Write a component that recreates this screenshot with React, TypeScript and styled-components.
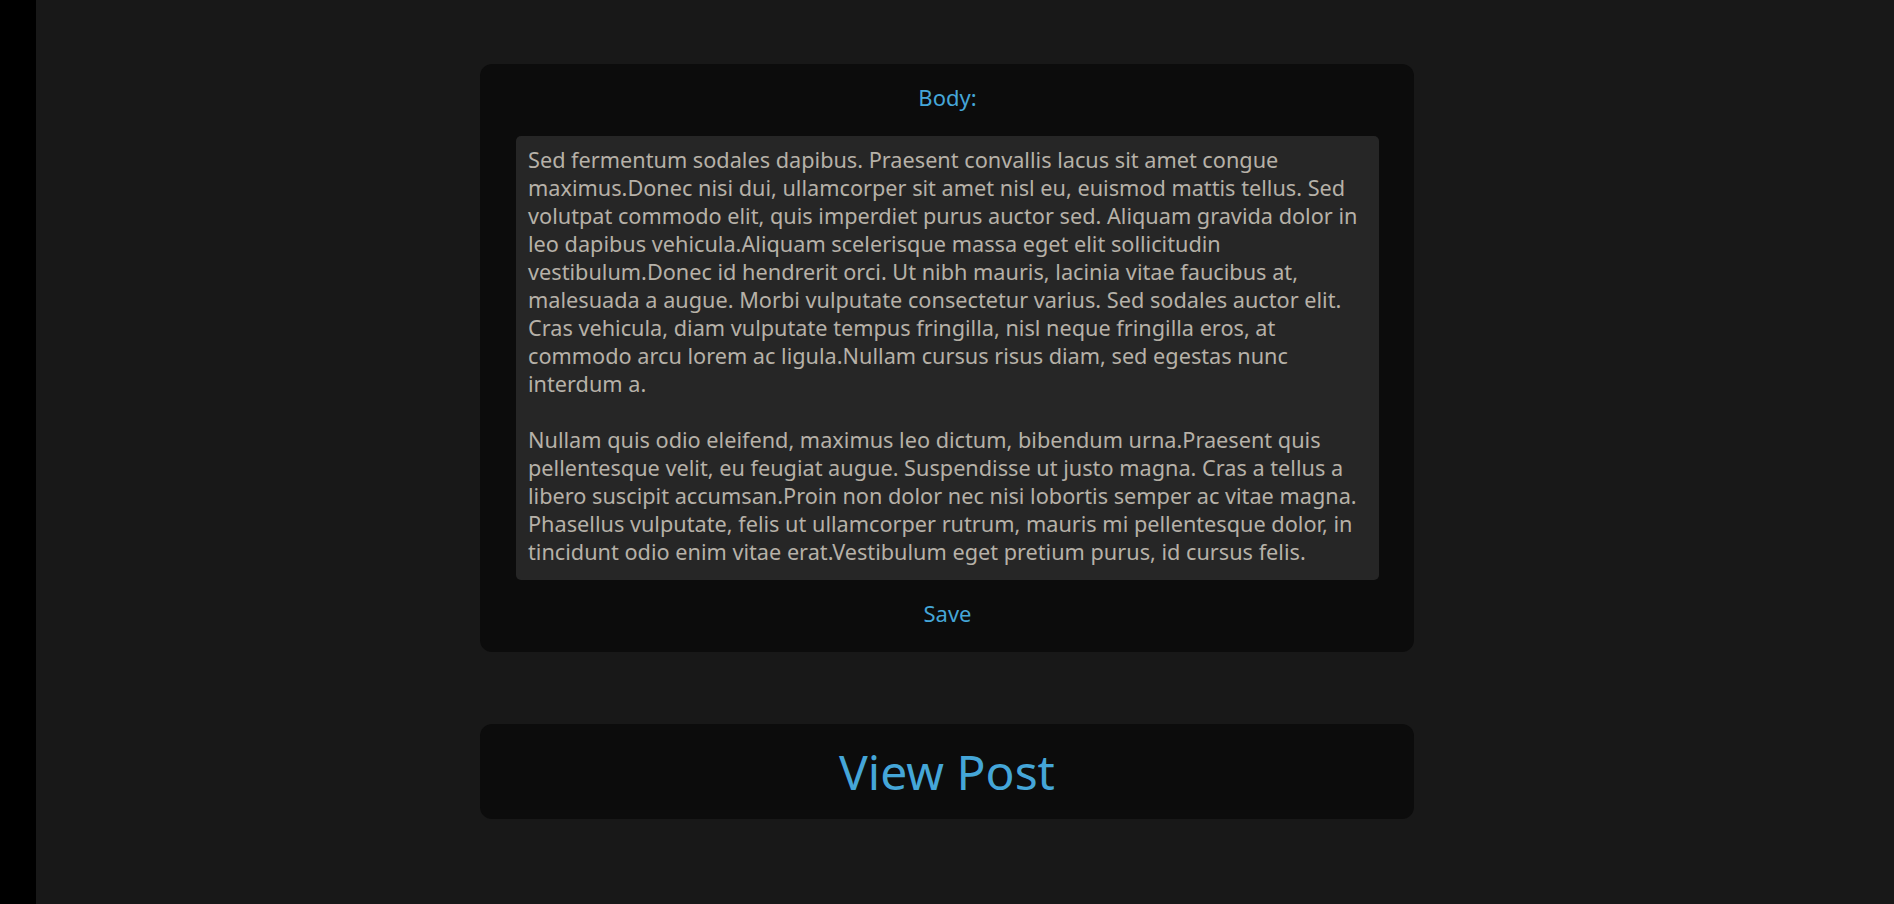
import { createGlobalStyle } from 'styled-components'
import styled from 'styled-components'

const BODY_TEXT = `Sed fermentum sodales dapibus. Praesent convallis lacus sit amet congue maximus.Donec nisi dui, ullamcorper sit amet nisl eu, euismod mattis tellus. Sed volutpat commodo elit, quis imperdiet purus auctor sed. Aliquam gravida dolor in leo dapibus vehicula.Aliquam scelerisque massa eget elit sollicitudin vestibulum.Donec id hendrerit orci. Ut nibh mauris, lacinia vitae faucibus at, malesuada a augue. Morbi vulputate consectetur varius. Sed sodales auctor elit. Cras vehicula, diam vulputate tempus fringilla, nisl neque fringilla eros, at commodo arcu lorem ac ligula.Nullam cursus risus diam, sed egestas nunc interdum a.

Nullam quis odio eleifend, maximus leo dictum, bibendum urna.Praesent quis pellentesque velit, eu feugiat augue. Suspendisse ut justo magna. Cras a tellus a libero suscipit accumsan.Proin non dolor nec nisi lobortis semper ac vitae magna. Phasellus vulputate, felis ut ullamcorper rutrum, mauris mi pellentesque dolor, in tincidunt odio enim vitae erat.Vestibulum eget pretium purus, id cursus felis.`

const GlobalStyle = createGlobalStyle`
  html, body {
    margin: 0;
    padding: 0;
    background: #181818;
    font-family: "Noto Sans", sans-serif;
  }
`

const App = () => {
  return (
    <>
      <GlobalStyle />
      <Layout>
        <Sidebar />
        <Main>
          <EditCard>
            <Label htmlFor="body">Body:</Label>
            <BodyInput id="body" defaultValue={BODY_TEXT} spellCheck={false} />
            <SaveButton type="button">Save</SaveButton>
          </EditCard>
          <ViewCard>
            <ViewLink href="#">View Post</ViewLink>
          </ViewCard>
        </Main>
      </Layout>
    </>
  )
}

export default App

const Layout = styled.div`
  display: flex;
  min-height: 904px;
`

const Sidebar = styled.aside`
  width: 36px;
  flex-shrink: 0;
  background: #000;
`

const Main = styled.main`
  flex: 1;
  padding: 64px 0 0 444px;
  display: flex;
  flex-direction: column;
  gap: 72px;
`

const EditCard = styled.form`
  width: 934px;
  box-sizing: border-box;
  background: #0c0c0c;
  border-radius: 12px;
  padding: 20px 35px 26px 36px;
  display: flex;
  flex-direction: column;
  align-items: center;
`

const Label = styled.label`
  color: #45a6d8;
  font-size: 22px;
  line-height: 26px;
  margin-bottom: 26px;
`

const BodyInput = styled.textarea`
  width: 100%;
  height: 444px;
  box-sizing: border-box;
  background: #262626;
  color: #b6b1a8;
  border: none;
  border-radius: 5px;
  padding: 10px 12px;
  font-family: "Noto Sans", sans-serif;
  font-size: 21.7px;
  line-height: 28px;
  resize: none;
  overflow: hidden;
  outline: none;
`

const SaveButton = styled.button`
  margin-top: 20px;
  background: none;
  border: none;
  padding: 0;
  color: #45a6d8;
  font-family: "Noto Sans", sans-serif;
  font-size: 22px;
  line-height: 26px;
  cursor: pointer;
`

const ViewCard = styled.div`
  width: 934px;
  height: 95px;
  box-sizing: border-box;
  background: #0c0c0c;
  border-radius: 12px;
  display: flex;
  align-items: center;
  justify-content: center;
`

const ViewLink = styled.a`
  color: #45a6d8;
  font-size: 48px;
  text-decoration: none;
`
